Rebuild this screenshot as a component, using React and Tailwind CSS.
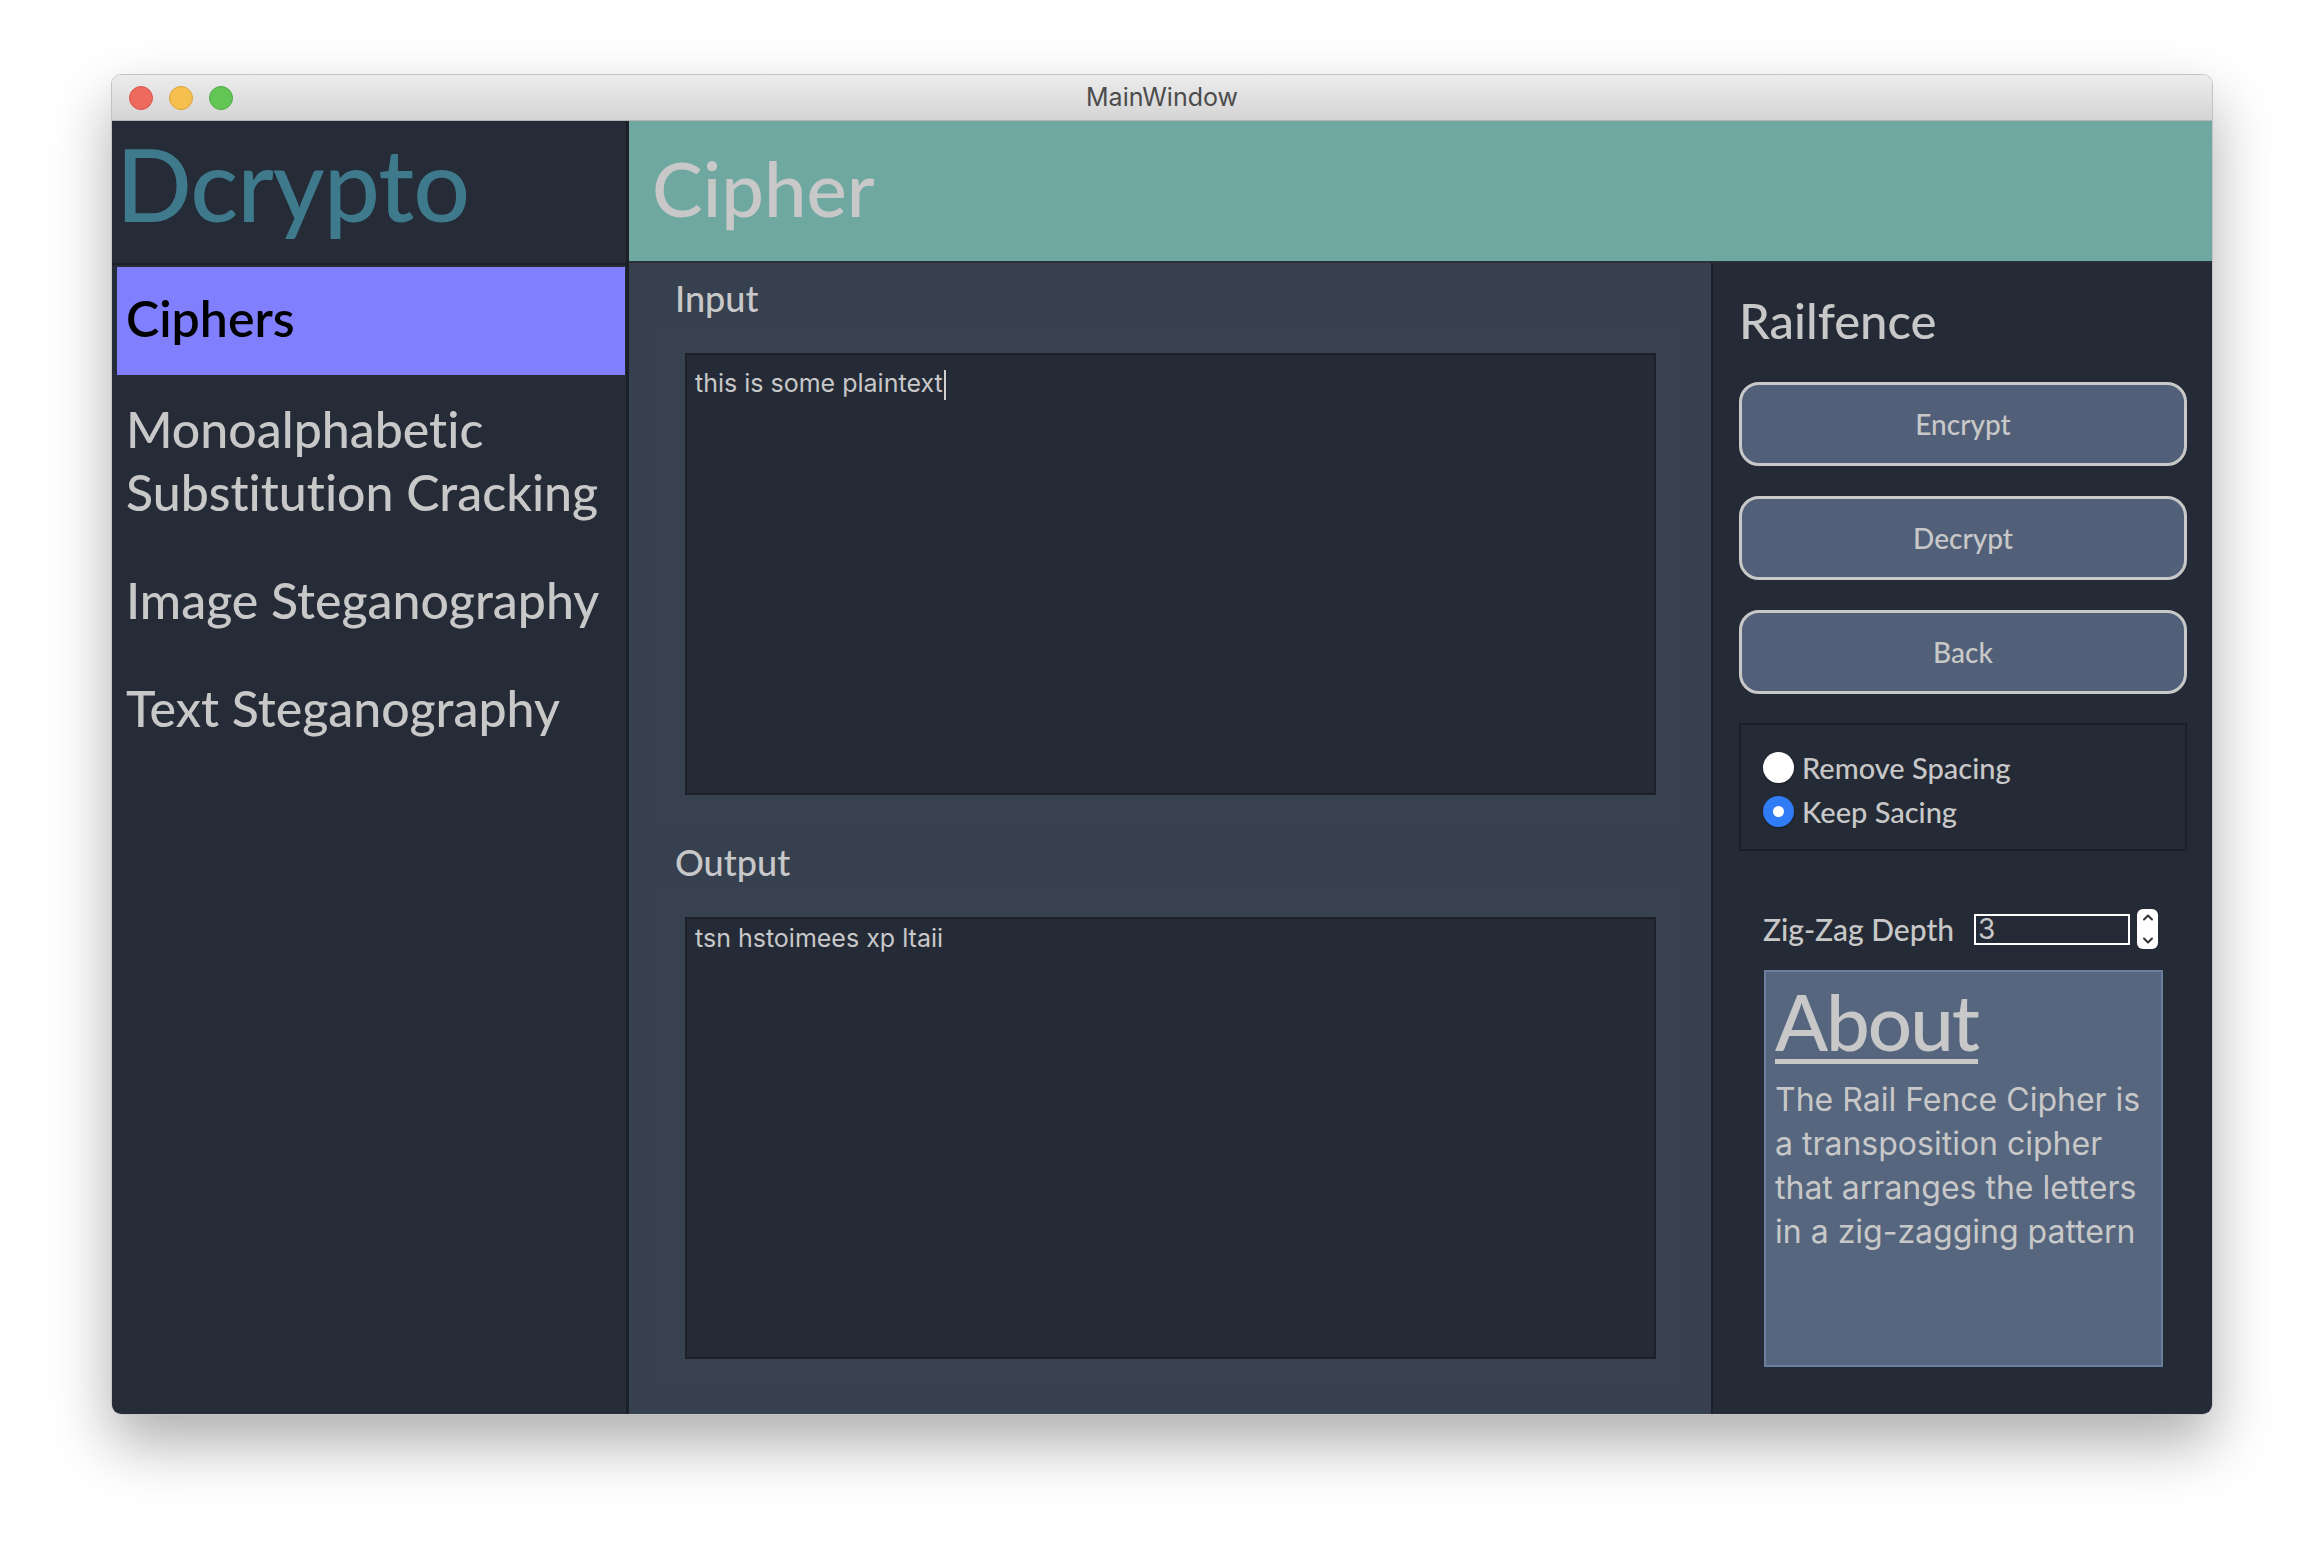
import React from "react";

const NAV_ITEMS = [
  { label: "Ciphers", active: true },
  { label: "Monoalphabetic\nSubstitution Cracking" },
  { label: "Image Steganography" },
  { label: "Text Steganography" },
];

function TitleBar() {
  return (
    <div className="grid h-[46px] shrink-0 grid-cols-[1fr_auto_1fr] items-center border-b border-[#b4b4b4] bg-gradient-to-b from-[#ececec] to-[#d5d5d5]">
      <div className="flex items-center gap-[16px] pl-[17px]">
        <span className="h-[24px] w-[24px] rounded-full border border-[#d8564b] bg-[#ee6a5f]" />
        <span className="h-[24px] w-[24px] rounded-full border border-[#dca33a] bg-[#f6c04f]" />
        <span className="h-[24px] w-[24px] rounded-full border border-[#4fa945] bg-[#62c655]" />
      </div>
      <div className="[font-family:Inter,sans-serif] text-[25px] text-[#4c4c4c]">MainWindow</div>
      <div />
    </div>
  );
}

function Sidebar() {
  return (
    <aside className="flex w-[517px] shrink-0 flex-col border-r-[3px] border-[#1b1f27] bg-[#252b37] [font-family:Lato,sans-serif]">
      {/* logo */}
      <div className="h-[142px] shrink-0 pl-[4px] pt-[12px] text-[100px] font-medium leading-none tracking-[-1px] text-[#3e7a8c]">
        Dcrypto
      </div>

      {/* list */}
      <div className="flex-1 border-t-2 border-[#1b1f27] pl-[5px] pr-[1px] pt-[2px]">
        {NAV_ITEMS.map((item) =>
          item.active ? (
            <div
              key={item.label}
              className="h-[108px] bg-[#8080ff] pl-[9px] pt-[26px] text-[50px] font-semibold leading-none text-black"
            >
              {item.label}
            </div>
          ) : (
            <div
              key={item.label}
              className="whitespace-pre-line pb-[22px] pl-[9px] pt-[23px] text-[50px] font-medium leading-[63px] text-[#c8c8c8]"
            >
              {item.label}
            </div>
          )
        )}
      </div>
    </aside>
  );
}

function TextBox({ label, text, caret }) {
  return (
    <>
      <div className="pl-[19px] text-[36px] font-medium leading-none text-[#c8c8c8] [font-family:Lato,sans-serif]">
        {label}
      </div>
      <div className="mt-[6px] rounded-[8px] bg-[#38414f] pb-[31px] pl-[29px] pr-[30px] pt-[31px]">
        <div className="h-[442px] border-2 border-[#1c2029] bg-[#252b36] px-[8px] pt-[7px] text-[25px] leading-none text-[#c8c8c8] [font-family:Inter,sans-serif]">
          {text}
          {caret && <span className="ml-[1px] inline-block h-[30px] w-[2px] translate-y-[8px] bg-[#d0d0d0]" />}
        </div>
      </div>
    </>
  );
}

function RadioRow({ label, checked }) {
  return (
    <div className="flex h-[44px] items-center gap-[8px]">
      {checked ? (
        <span className="flex h-[31px] w-[31px] items-center justify-center rounded-full bg-[#2f7cf6] shadow-[0_1px_2px_rgba(0,0,0,0.4)]">
          <span className="h-[11px] w-[11px] rounded-full bg-white" />
        </span>
      ) : (
        <span className="h-[31px] w-[31px] rounded-full bg-white shadow-[0_1px_2px_rgba(0,0,0,0.4)]" />
      )}
      <span className="text-[29px] font-medium leading-none text-[#c8c8c8]">{label}</span>
    </div>
  );
}

function ActionButton({ children }) {
  return (
    <button className="h-[84px] w-full rounded-[20px] border-[3px] border-[#c8c8c8] bg-[#516078] text-[28px] font-medium text-[#c8c8c8]">
      {children}
    </button>
  );
}

function RightPanel() {
  return (
    <section className="flex flex-1 flex-col border-l-2 border-[#1c2029] bg-[#252b36] pl-[26px] pr-[25px] pt-[33px] [font-family:Lato,sans-serif]">
      <h2 className="text-[49px] font-medium leading-none text-[#c8c8c8]">Railfence</h2>

      <div className="mt-[37px] flex flex-col gap-[30px]">
        <ActionButton>Encrypt</ActionButton>
        <ActionButton>Decrypt</ActionButton>
        <ActionButton>Back</ActionButton>
      </div>

      <div className="mt-[29px] h-[128px] border-2 border-[#1b1f27] pl-[22px] pt-[20px]">
        <RadioRow label="Remove Spacing" />
        <RadioRow label="Keep Sacing" checked />
      </div>

      <div className="mt-[58px] flex h-[40px] items-center pl-[24px]">
        <span className="w-[211px] text-[30px] font-medium leading-none text-[#c8c8c8]">Zig-Zag Depth</span>
        <div className="flex h-[31px] w-[156px] items-center border-2 border-white bg-[#252b36] pl-[2px] text-[28px] leading-none text-[#c8c8c8] [font-family:Inter,sans-serif]">
          3
        </div>
        <div className="ml-[7px] flex h-[40px] w-[21px] flex-col items-center justify-between rounded-[6px] bg-white py-[4px]">
          <svg width="12" height="8" viewBox="0 0 12 8" fill="none">
            <path d="M2 6.5 L6 2.5 L10 6.5" stroke="#333" strokeWidth="2" strokeLinecap="round" strokeLinejoin="round" />
          </svg>
          <svg width="12" height="8" viewBox="0 0 12 8" fill="none">
            <path d="M2 1.5 L6 5.5 L10 1.5" stroke="#333" strokeWidth="2" strokeLinecap="round" strokeLinejoin="round" />
          </svg>
        </div>
      </div>

      <div className="ml-[25px] mt-[21px] h-[397px] w-[399px] border-2 border-[#6a7ea0] bg-[#56667f] pl-[9px] pt-[10px]">
        <div className="text-[78px] font-medium leading-none tracking-[-2px] text-[#c8c8c8] underline decoration-[5px] underline-offset-[8px]">
          About
        </div>
        <p className="mt-[18px] text-[32px] leading-[44px] text-[#c8c8c8] [font-family:Inter,sans-serif]">
          <span className="block whitespace-nowrap">The Rail Fence Cipher is</span>
          <span className="block whitespace-nowrap">a transposition cipher</span>
          <span className="block whitespace-nowrap">that arranges the letters</span>
          <span className="block whitespace-nowrap">in a zig-zagging pattern</span>
        </p>
      </div>
    </section>
  );
}

export default function App() {
  return (
    <div className="min-h-screen w-full bg-white pl-[111px] pt-[74px] [font-variant-ligatures:none]">
      <div className="flex h-[1341px] w-[2102px] flex-col overflow-hidden rounded-[10px] border border-[#c4c4c4] shadow-[0_28px_60px_rgba(0,0,0,0.32)]">
        <TitleBar />

        <div className="flex min-h-0 flex-1">
          <Sidebar />

          <div className="flex min-w-0 flex-1 flex-col">
            {/* page header */}
            <header className="h-[142px] shrink-0 border-b-2 border-[#2a3039] bg-[#6fa8a1] pl-[23px] pt-[29px] text-[76px] font-medium leading-none text-[#c8c8c8] [font-family:Lato,sans-serif]">
              Cipher
            </header>

            <div className="flex min-h-0 flex-1">
              {/* input / output */}
              <main className="w-[1082px] shrink-0 bg-[#36404f] pb-[26px] pl-[27px] pr-[25px] pt-[17px]">
                <TextBox label="Input" text="this is some plaintext" caret />
                <div className="h-[18px]" />
                <TextBox label="Output" text="tsn hstoimees xp ltaii" />
              </main>

              <RightPanel />
            </div>
          </div>
        </div>
      </div>
    </div>
  );
}
